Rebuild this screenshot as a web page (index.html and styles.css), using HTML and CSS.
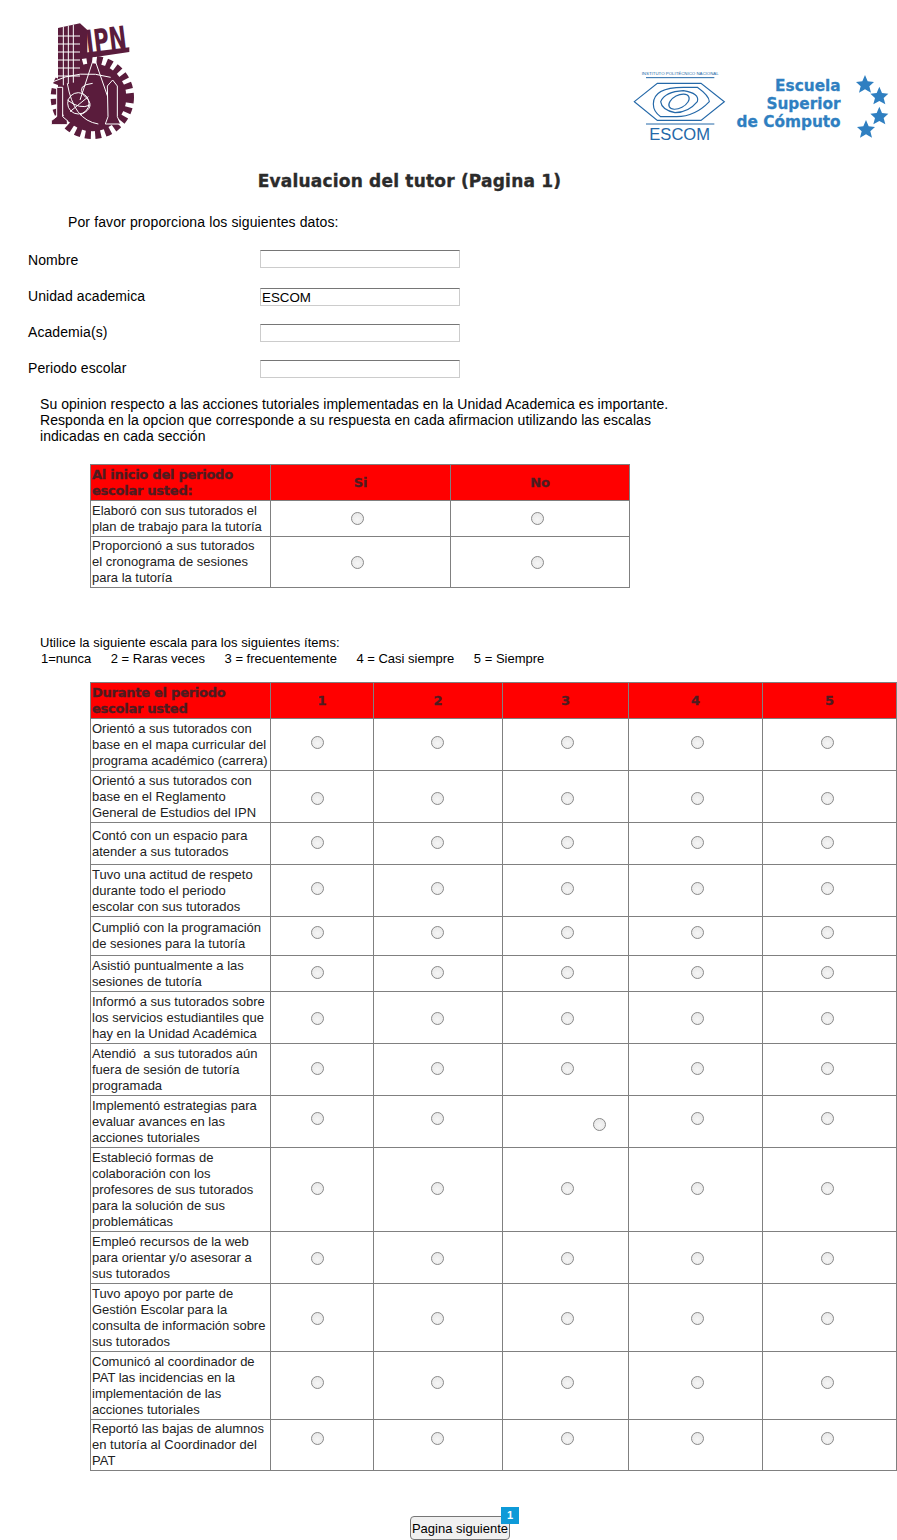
FILE: index.html
```html
<!DOCTYPE html>
<html lang="es">
<head>
<meta charset="utf-8">
<title>Evaluacion del tutor</title>
<link rel="stylesheet" href="styles.css">
</head>
<body>
<header class="logos">
  <svg class="logo-ipn" viewBox="0 0 390 450" width="130" height="150" aria-label="IPN">
    <g fill="#5a1c3c" stroke="none">
      <circle cx="187" cy="292" r="112" fill="none" stroke="#5a1c3c" stroke-width="26" stroke-dasharray="17 13"/>
      <circle cx="187" cy="292" r="102"/>
      <path d="M84 84 L150 70 L150 245 L84 262 Z"/>
      <path d="M150 70 L172 90 L172 165 L150 165 Z"/>
      <path d="M150 160 L298 142 L298 156 L150 178 Z"/>
    </g>
    <g stroke="#fff" stroke-width="3" fill="none">
      <path d="M100 80 V256 M115 77 V252 M130 74 V248 M84 108 H150 M84 132 H150 M84 156 H150 M84 180 H150 M84 204 H150 M84 228 H150"/>
      <path d="M62 248 Q150 205 242 232"/>
      <path d="M192 172 L150 300 M192 172 L240 310"/>
      <path d="M188 250 Q140 255 160 285 Q205 320 150 345"/>
      <circle cx="145" cy="310" r="32"/>
      <path d="M112 300 Q150 330 180 315 M120 335 L175 290"/>
      <path d="M80 262 V350 L64 362 V374 H112 V362 L98 350 V262 Z" fill="#5a1c3c"/>
      <path d="M232 258 L248 240 L262 258 V350 L272 372 H226 L234 350 Z" fill="#5a1c3c"/>
      <path d="M112 250 Q130 360 205 372"/>
    </g>
    <text class="ipn-letters" x="172" y="160" textLength="122" lengthAdjust="spacingAndGlyphs" transform="rotate(-7 172 160)">IPN</text>
  </svg>
  <svg class="logo-escom" viewBox="0 0 831 270" width="277" height="90" aria-label="ESCOM">
    <text class="escom-top" x="65" y="44" textLength="231" lengthAdjust="spacingAndGlyphs">INSTITUTO POLITÉCNICO NACIONAL</text>
    <path d="M78 53 H283 M78 192 H283" stroke="#2468a8" stroke-width="3" fill="none"/>
    <g fill="none" stroke="#2468a8" stroke-width="3.5">
      <path d="M43 125 L112 70 H243 L313 125 L243 181 H112 Z"/>
      <path d="M100 132 Q100 82 190 82 H232 Q268 108 268 125 Q225 170 170 170 H122 Q100 155 100 132 Z"/>
      <path d="M122 125 Q135 95 190 92 Q240 100 232 125 Q205 158 165 158 Q125 150 122 125 Z"/>
      <ellipse cx="177" cy="125" rx="33" ry="19" transform="rotate(-28 177 125)"/>
    </g>
    <text class="escom-name" x="88" y="241" textLength="182" lengthAdjust="spacingAndGlyphs">ESCOM</text>
    <g class="escuela">
      <text x="662" y="93">Escuela</text>
      <text x="662" y="147">Superior</text>
      <text x="662" y="201">de Cómputo</text>
    </g>
    <g fill="#2f7fc1">
      <polygon points="735,45 743,64 762,66 748,79 753,98 735,88 717,98 722,79 708,66 727,64"/>
      <polygon points="778,80 786,99 805,101 791,114 796,133 778,123 760,133 765,114 751,101 770,99"/>
      <polygon points="778,140 786,159 805,161 791,174 796,193 778,183 760,193 765,174 751,161 770,159"/>
      <polygon points="738,180 746,199 765,201 751,214 756,233 738,223 720,233 725,214 711,201 730,199"/>
    </g>
  </svg>
</header>

<h1 class="title">Evaluacion del tutor (Pagina 1)</h1>
<p class="intro">Por favor proporciona los siguientes datos:</p>

<form class="survey">
  <div class="fields">
    <label class="field first"><span>Nombre</span><input type="text" class="text-input"></label>
    <label class="field"><span>Unidad academica</span><input type="text" class="text-input" value="ESCOM"></label>
    <label class="field"><span>Academia(s)</span><input type="text" class="text-input"></label>
    <label class="field"><span>Periodo escolar</span><input type="text" class="text-input"></label>
  </div>

  <p class="lead">Su opinion respecto a las acciones tutoriales implementadas en la Unidad Academica es importante.<br>Responda en la opcion que corresponde a su respuesta en cada afirmacion utilizando las escalas<br>indicadas en cada sección</p>

  <table class="grid grid-a">
    <colgroup><col class="w-q"><col class="w-ab"><col class="w-ab-last"></colgroup>
    <tr class="h36"><th class="q">Al inicio del periodo escolar usted:</th><th>Si</th><th>No</th></tr>
    <tr class="h36 a1"><td class="q">Elaboró con sus tutorados el plan de trabajo para la tutoría</td><td class="opt"><input class="radio" type="radio" name="a1"></td><td class="opt"><input class="radio" type="radio" name="a1"></td></tr>
    <tr class="h51 a2"><td class="q">Proporcionó a sus tutorados<br>el cronograma de sesiones para la tutoría</td><td class="opt"><input class="radio" type="radio" name="a2"></td><td class="opt"><input class="radio" type="radio" name="a2"></td></tr>
  </table>

  <div class="scale">
    <p>Utilice la siguiente escala para los siguientes ítems:</p>
    <ul class="scale-list"><li>1=nunca</li><li>2 = Raras veces</li><li>3 = frecuentemente</li><li>4 = Casi siempre</li><li>5 = Siempre</li></ul>
  </div>

  <table class="grid grid-b">
    <colgroup><col class="w-q"><col class="w-1"><col class="w-2"><col class="w-3"><col class="w-4"><col class="w-5"></colgroup>
    <tr class="h36"><th class="q">Durante el periodo escolar usted</th><th>1</th><th>2</th><th>3</th><th>4</th><th>5</th></tr>
    <tr class="h52 r1"><td class="q">Orientó a sus tutorados con base en el mapa curricular del programa académico (carrera)</td><td class="opt"><input class="radio" type="radio" name="q1"></td><td class="opt"><input class="radio" type="radio" name="q1"></td><td class="opt"><input class="radio" type="radio" name="q1"></td><td class="opt"><input class="radio" type="radio" name="q1"></td><td class="opt"><input class="radio" type="radio" name="q1"></td></tr>
    <tr class="h52 r2"><td class="q">Orientó a sus tutorados con base en el Reglamento General de Estudios del IPN</td><td class="opt"><input class="radio" type="radio" name="q2"></td><td class="opt"><input class="radio" type="radio" name="q2"></td><td class="opt"><input class="radio" type="radio" name="q2"></td><td class="opt"><input class="radio" type="radio" name="q2"></td><td class="opt"><input class="radio" type="radio" name="q2"></td></tr>
    <tr class="h42 r3"><td class="q">Contó con un espacio para atender a sus tutorados</td><td class="opt"><input class="radio" type="radio" name="q3"></td><td class="opt"><input class="radio" type="radio" name="q3"></td><td class="opt"><input class="radio" type="radio" name="q3"></td><td class="opt"><input class="radio" type="radio" name="q3"></td><td class="opt"><input class="radio" type="radio" name="q3"></td></tr>
    <tr class="h52 r4"><td class="q">Tuvo una actitud de respeto durante todo el periodo escolar con sus tutorados</td><td class="opt"><input class="radio" type="radio" name="q4"></td><td class="opt"><input class="radio" type="radio" name="q4"></td><td class="opt"><input class="radio" type="radio" name="q4"></td><td class="opt"><input class="radio" type="radio" name="q4"></td><td class="opt"><input class="radio" type="radio" name="q4"></td></tr>
    <tr class="h39 r5"><td class="q">Cumplió con la programación de sesiones para la tutoría</td><td class="opt"><input class="radio" type="radio" name="q5"></td><td class="opt"><input class="radio" type="radio" name="q5"></td><td class="opt"><input class="radio" type="radio" name="q5"></td><td class="opt"><input class="radio" type="radio" name="q5"></td><td class="opt"><input class="radio" type="radio" name="q5"></td></tr>
    <tr class="h36 r6"><td class="q">Asistió puntualmente a las sesiones de tutoría</td><td class="opt"><input class="radio" type="radio" name="q6"></td><td class="opt"><input class="radio" type="radio" name="q6"></td><td class="opt"><input class="radio" type="radio" name="q6"></td><td class="opt"><input class="radio" type="radio" name="q6"></td><td class="opt"><input class="radio" type="radio" name="q6"></td></tr>
    <tr class="h52 r7"><td class="q">Informó a sus tutorados sobre los servicios estudiantiles que hay en la Unidad Académica</td><td class="opt"><input class="radio" type="radio" name="q7"></td><td class="opt"><input class="radio" type="radio" name="q7"></td><td class="opt"><input class="radio" type="radio" name="q7"></td><td class="opt"><input class="radio" type="radio" name="q7"></td><td class="opt"><input class="radio" type="radio" name="q7"></td></tr>
    <tr class="h52 r8"><td class="q">Atendió&nbsp; a sus tutorados aún fuera de sesión de tutoría programada</td><td class="opt"><input class="radio" type="radio" name="q8"></td><td class="opt"><input class="radio" type="radio" name="q8"></td><td class="opt"><input class="radio" type="radio" name="q8"></td><td class="opt"><input class="radio" type="radio" name="q8"></td><td class="opt"><input class="radio" type="radio" name="q8"></td></tr>
    <tr class="h52 r9"><td class="q">Implementó estrategias para evaluar avances en las acciones tutoriales</td><td class="opt"><input class="radio" type="radio" name="q9"></td><td class="opt"><input class="radio" type="radio" name="q9"></td><td class="opt shifted"><input class="radio" type="radio" name="q9"></td><td class="opt"><input class="radio" type="radio" name="q9"></td><td class="opt"><input class="radio" type="radio" name="q9"></td></tr>
    <tr class="h84 r10"><td class="q">Estableció formas de colaboración con los profesores de sus tutorados para la solución de sus problemáticas</td><td class="opt"><input class="radio" type="radio" name="q10"></td><td class="opt"><input class="radio" type="radio" name="q10"></td><td class="opt"><input class="radio" type="radio" name="q10"></td><td class="opt"><input class="radio" type="radio" name="q10"></td><td class="opt"><input class="radio" type="radio" name="q10"></td></tr>
    <tr class="h52 r11"><td class="q">Empleó recursos de la web para orientar y/o asesorar a sus tutorados</td><td class="opt"><input class="radio" type="radio" name="q11"></td><td class="opt"><input class="radio" type="radio" name="q11"></td><td class="opt"><input class="radio" type="radio" name="q11"></td><td class="opt"><input class="radio" type="radio" name="q11"></td><td class="opt"><input class="radio" type="radio" name="q11"></td></tr>
    <tr class="h68 r12"><td class="q">Tuvo apoyo por parte de Gestión Escolar para la consulta de información sobre sus tutorados</td><td class="opt"><input class="radio" type="radio" name="q12"></td><td class="opt"><input class="radio" type="radio" name="q12"></td><td class="opt"><input class="radio" type="radio" name="q12"></td><td class="opt"><input class="radio" type="radio" name="q12"></td><td class="opt"><input class="radio" type="radio" name="q12"></td></tr>
    <tr class="h68 r13"><td class="q">Comunicó al coordinador de PAT las incidencias en la implementación de las acciones tutoriales</td><td class="opt"><input class="radio" type="radio" name="q13"></td><td class="opt"><input class="radio" type="radio" name="q13"></td><td class="opt"><input class="radio" type="radio" name="q13"></td><td class="opt"><input class="radio" type="radio" name="q13"></td><td class="opt"><input class="radio" type="radio" name="q13"></td></tr>
    <tr class="h51 r14"><td class="q">Reportó las bajas de alumnos en tutoría al Coordinador del PAT</td><td class="opt"><input class="radio" type="radio" name="q14"></td><td class="opt"><input class="radio" type="radio" name="q14"></td><td class="opt"><input class="radio" type="radio" name="q14"></td><td class="opt"><input class="radio" type="radio" name="q14"></td><td class="opt"><input class="radio" type="radio" name="q14"></td></tr>
  </table>

  <div class="actions">
    <button type="button" class="next">Pagina siguiente<span class="badge">1</span></button>
  </div>
</form>
</body>
</html>
```
FILE: styles.css
```css
* { box-sizing: border-box; }
html, body { margin: 0; padding: 0; }
body {
  width: 897px;
  height: 1540px;
  overflow: hidden;
  background: #fff;
  color: #000;
  font-family: "Liberation Sans", Arial, sans-serif;
  font-size: 14px;
}

.logos {
  display: flex;
  justify-content: space-between;
  align-items: flex-start;
  height: 150px;
  padding-left: 30px;
}
.logo-ipn { display: block; }
.logo-escom { display: block; margin-top: 60px; }
.ipn-letters {
  font-family: "DejaVu Sans", sans-serif;
  font-weight: 700;
  font-size: 96px;
  fill: #5a1c3c;
}
.escom-top { font-family: "Liberation Sans", sans-serif; font-size: 13px; fill: #2468a8; }
.escom-name { font-family: "Liberation Sans", sans-serif; font-size: 52px; fill: #2468a8; }
.escuela text {
  font-family: "DejaVu Sans", sans-serif;
  font-weight: 700;
  font-size: 46px;
  fill: #2f7fc1;
  stroke: #2f7fc1;
  stroke-width: 0.8px;
  text-anchor: end;
}

.title {
  margin: 20px 78px 0 0;
  font-family: "DejaVu Sans", sans-serif;
  font-size: 17px;
  line-height: 22px;
  font-weight: 700;
  text-align: center;
  color: #2b2b2b;
  letter-spacing: 0.2px;
  -webkit-text-stroke: 0.35px #2b2b2b;
}
.intro {
  margin: 22px 0 0 68px;
  line-height: 16px;
  letter-spacing: 0.12px;
}

.fields { margin-top: 12px; padding-left: 28px; }
.field {
  display: flex;
  align-items: center;
  height: 36px;
}
.field span { width: 232px; letter-spacing: 0.08px; }
.text-input {
  width: 200px;
  height: 18px;
  margin: 2px 0 0;
  padding: 0 1px;
  font: 13.33px "Liberation Sans", Arial, sans-serif;
  color: #000;
  background: #fff;
  border: 1px solid #ccc;
  border-top-color: #767676;
  border-radius: 0;
  outline: 0;
}
.field.first .text-input { margin: 0 0 2px; }

.lead {
  margin: 10px 0 0 40px;
  line-height: 16px;
  letter-spacing: 0.05px;
}

.grid {
  border-collapse: collapse;
  table-layout: fixed;
  margin-left: 90px;
  font-size: 13px;
  line-height: 16px;
}
.grid th, .grid td { border: 1px solid #808080; padding: 0; }
.grid th {
  background: #ff0000;
  color: #4d1c20;
  font-family: "DejaVu Sans", sans-serif;
  font-size: 13px;
  text-align: center;
  letter-spacing: -0.25px;
  -webkit-text-stroke: 0.3px #4d1c20;
}
.grid .q { padding: 0 1px; text-align: left; vertical-align: middle; color: #222; }
.grid th.q { color: #4d1c20; }
.grid-a { width: 539px; margin-top: 20px; }
.grid-b { width: 807px; margin-top: 0; }
.w-q { width: 180px; }
.w-ab { width: 180px; }
.w-ab-last { width: 179px; }
.w-1 { width: 103px; }
.w-2 { width: 129px; }
.w-3 { width: 126px; }
.w-4 { width: 134px; }
.w-5 { width: 134px; }

.h36 { height: 36px; }
.h39 { height: 39px; }
.h42 { height: 42px; }
.h51 { height: 51px; }
.h52 { height: 52px; }
.h68 { height: 68px; }
.h84 { height: 84px; }

.grid .opt { vertical-align: top; }
.radio {
  appearance: none;
  display: block;
  width: 13px;
  height: 13px;
  margin: 0;
  border: 1px solid #8a8a8a;
  border-radius: 50%;
  background: radial-gradient(circle at 50% 60%, #f6f6f6, #e4e4e4);
}
.grid-a .radio { margin-left: 80px; }
.grid-b .opt:nth-child(2) .radio { margin-left: 40px; }
.grid-b .opt:nth-child(3) .radio { margin-left: 57px; }
.grid-b .opt:nth-child(4) .radio { margin-left: 58px; }
.grid-b .opt:nth-child(5) .radio { margin-left: 62px; }
.grid-b .opt:nth-child(6) .radio { margin-left: 58px; }

.a1 .radio { margin-top: 11px; }
.a2 .radio { margin-top: 19px; }
.r1 .radio { margin-top: 17px; }
.r2 .radio { margin-top: 21px; }
.r3 .radio { margin-top: 13px; }
.r4 .radio { margin-top: 17px; }
.r5 .radio { margin-top: 9px; }
.r6 .radio { margin-top: 10px; }
.r7 .radio { margin-top: 20px; }
.r8 .radio { margin-top: 18px; }
.r9 .radio { margin-top: 16px; }
.r10 .radio { margin-top: 34px; }
.r11 .radio { margin-top: 20px; }
.r12 .radio { margin-top: 28px; }
.r13 .radio { margin-top: 24px; }
.r14 .radio { margin-top: 12px; }
.grid-b .r9 .shifted .radio { margin-top: 22px; margin-left: 90px; }

.scale {
  margin: 47px 0 15px 40px;
  font-size: 13px;
  line-height: 16px;
}
.scale p { margin: 0; letter-spacing: 0.05px; }
.scale-list {
  display: flex;
  gap: 19.5px;
  margin: 0;
  padding: 0 0 0 1px;
  list-style: none;
}

.actions {
  display: flex;
  justify-content: center;
  padding: 45px 0 0 23px;
}
.next {
  position: relative;
  width: 100px;
  height: 24px;
  padding: 0;
  white-space: nowrap;
  font: 13px "Liberation Sans", Arial, sans-serif;
  color: #000;
  background: #f0f0f0;
  border: 1px solid #767676;
  border-radius: 4px;
}
.badge {
  position: absolute;
  top: -10px;
  right: -10px;
  width: 18px;
  height: 17px;
  background: #0e9ad8;
  color: #fff;
  font-size: 11px;
  font-weight: 700;
  line-height: 17px;
  text-align: center;
}
```
